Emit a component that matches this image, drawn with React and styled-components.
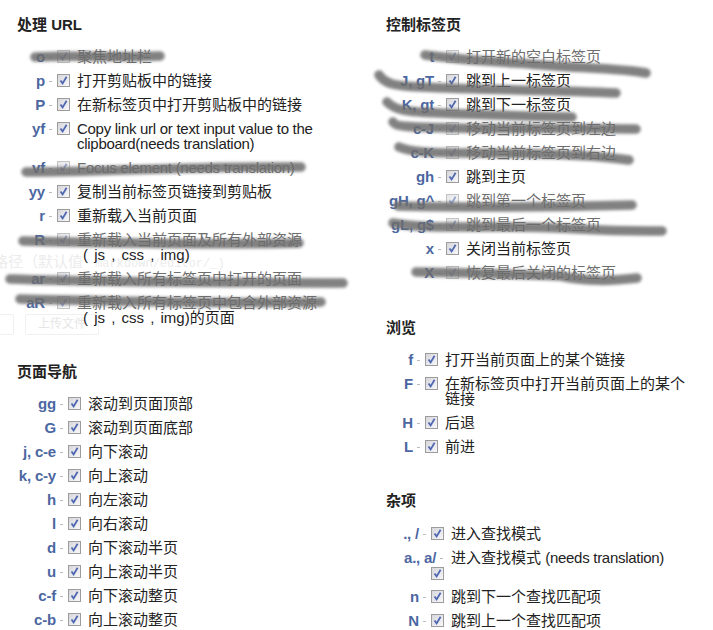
import React from "react";
import styled, { createGlobalStyle } from "styled-components";

const Global = createGlobalStyle`
  html {
    background: #fff;
  }
  body {
    margin: 0;
    font-family: "Liberation Sans", "Noto Sans CJK SC", sans-serif;
    font-size: 15px;
    color: #222;
  }
`;

const Page = styled.div`
  position: relative;
  isolation: isolate;
  width: 713px;
  height: 630px;
  overflow: hidden;
  display: grid;
  grid-template-columns: 369px 1fr;
  padding-left: 17px;
  box-sizing: border-box;
`;

const Column = styled.div`
  padding-top: 15px;
`;

const Section = styled.section`
  margin-bottom: ${(p) => p.$after || 33}px;
`;

const Heading = styled.h3`
  margin: 0 0 ${(p) => p.$gap || 10}px;
  font-size: 15px;
  line-height: 20px;
  font-weight: bold;
  color: #222;
`;

const Row = styled.div`
  display: grid;
  grid-template-columns: ${(p) => p.$keyWidth}px 12px 13px 1fr;
  padding: 4px 0 5px;
  line-height: 15px;
`;

const KeyCell = styled.div`
  grid-column: 1 / span ${(p) => (p.$wide ? 3 : 2)};
  grid-row: 1;
  display: flex;
  justify-content: ${(p) => (p.$wide ? "flex-start" : "flex-end")};
  padding-left: ${(p) => (p.$wide ? 18 : 0)}px;
  white-space: nowrap;
`;

const Key = styled.span`
  font-weight: bold;
  letter-spacing: -0.2px;
  color: #4c67a1;
`;

const Dash = styled.span`
  flex: none;
  width: 12px;
  &::after {
    content: "";
    display: block;
    width: 3px;
    height: 1px;
    margin: 8px 0 0 4px;
    background: #bbb;
  }
`;

const Box = styled.span`
  width: 13px;
  height: 13px;
  margin-top: ${(p) => (p.$below ? 2 : 1)}px;
  box-sizing: border-box;
  border: 1px solid #9c9c9c;
  background: linear-gradient(135deg, #d6d6dc, #f8f8fb);
  display: flex;
  align-items: center;
  justify-content: center;
  grid-column: 3;
  grid-row: ${(p) => (p.$below ? 2 : 1)};
  opacity: ${(p) => (p.$faded ? 0.6 : 1)};
`;

const Label = styled.span`
  grid-column: 4;
  grid-row: 1;
  margin-left: 7px;
  max-width: 250px;
  &::first-line {
    color: ${(p) => (p.$faded ? "#6e6e6e" : "#222")};
  }
`;

const En = styled.span`
  letter-spacing: -0.28px;
`;

const Note = styled.span`
  display: block;
  padding-left: 6px;
  word-spacing: 2px;
  color: #222;
`;

const GhostPath = styled.div`
  position: absolute;
  z-index: -1;
  left: -7px;
  top: 250px;
  white-space: nowrap;
  font-size: 15px;
  color: #ececec;
`;

const GhostMono = styled.span`
  margin-left: 12px;
  font-size: 12px;
  font-family: "Liberation Mono", monospace;
`;

const GhostButton = styled.div`
  position: absolute;
  z-index: -1;
  left: ${(p) => p.$left}px;
  top: 314px;
  width: ${(p) => p.$width}px;
  height: 21px;
  box-sizing: border-box;
  border: 1px solid #f0f0f0;
  border-radius: 2px;
  font-size: 12px;
  line-height: 19px;
  text-align: center;
  color: #e6e6e6;
`;

const Scribbles = styled.svg`
  position: absolute;
  left: 0;
  top: 0;
  pointer-events: none;
`;

const Stroke = styled.path`
  fill: none;
  stroke: #6c6c6c;
  stroke-width: 9.5;
  stroke-linecap: round;
  stroke-linejoin: round;
  opacity: 0.85;
  filter: blur(1.8px);
`;

const strokes = [
  "M35 57 C80 55 120 58 160 56",
  "M26 172 C100 172 200 166 301 167",
  "M23 241 C110 243 220 245 299 243",
  "M10 279 C120 283 240 282 343 283",
  "M20 299 C120 301 230 304 321 302",
  "M425 55 C460 60 500 62 530 64 C570 68 620 68 646 73",
  "M379 75 C385 84 395 86 420 87 C480 90 560 90 616 93",
  "M387 102 C395 110 405 112 440 113 C490 115 530 116 572 117",
  "M393 122 C395 127 410 127 450 128 C520 129 590 128 636 129",
  "M399 147 C410 152 430 153 470 153 C530 153 590 154 629 160",
  "M398 206 C480 208 560 207 632 205",
  "M393 223 C420 228 450 227 500 227 C560 226 590 232 662 231",
  "M416 272 C470 273 510 274 560 276 C590 282 610 281 637 278",
];

const CheckMark = () => (
  <svg width="9" height="9" viewBox="0 0 9 9">
    <path d="M1.5 4.5 L3.6 7.4 L7.6 0.8" fill="none" stroke="#5068b0" strokeWidth="1.8" />
  </svg>
);

const Shortcut = ({ keys, text, keyWidth, faded, boxBelow }) => (
  <Row $keyWidth={keyWidth}>
    <KeyCell $wide={boxBelow}>
      <Key>{keys}</Key>
      <Dash />
    </KeyCell>
    <Box $below={boxBelow} $faded={faded}>
      <CheckMark />
    </Box>
    <Label $faded={faded}>{text}</Label>
  </Row>
);

const urlRows = [
  { keys: "o", text: "聚焦地址栏", faded: true },
  { keys: "p", text: "打开剪贴板中的链接" },
  { keys: "P", text: "在新标签页中打开剪贴板中的链接" },
  { keys: "yf", text: <En>Copy link url or text input value to the clipboard(needs translation)</En> },
  { keys: "vf", text: <En>Focus element (needs translation)</En>, faded: true },
  { keys: "yy", text: "复制当前标签页链接到剪贴板" },
  { keys: "r", text: "重新载入当前页面" },
  { keys: "R", text: <>重新载入当前页面及所有外部资源<Note>( js , css , img)</Note></>, faded: true },
  { keys: "ar", text: "重新载入所有标签页中打开的页面", faded: true },
  { keys: "aR", text: <>重新载入所有标签页中包含外部资源<Note>( js , css , img)的页面</Note></>, faded: true },
];

const navRows = [
  { keys: "gg", text: "滚动到页面顶部" },
  { keys: "G", text: "滚动到页面底部" },
  { keys: "j, c-e", text: "向下滚动" },
  { keys: "k, c-y", text: "向上滚动" },
  { keys: "h", text: "向左滚动" },
  { keys: "l", text: "向右滚动" },
  { keys: "d", text: "向下滚动半页" },
  { keys: "u", text: "向上滚动半页" },
  { keys: "c-f", text: "向下滚动整页" },
  { keys: "c-b", text: "向上滚动整页" },
];

const tabRows = [
  { keys: "t", text: "打开新的空白标签页", faded: true },
  { keys: "J, gT", text: "跳到上一标签页" },
  { keys: "K, gt", text: "跳到下一标签页" },
  { keys: "c-J", text: "移动当前标签页到左边", faded: true },
  { keys: "c-K", text: "移动当前标签页到右边", faded: true },
  { keys: "gh", text: "跳到主页" },
  { keys: "gH, g^", text: "跳到第一个标签页", faded: true },
  { keys: "gL, g$", text: "跳到最后一个标签页", faded: true },
  { keys: "x", text: "关闭当前标签页" },
  { keys: "X", text: "恢复最后关闭的标签页", faded: true },
];

const browseRows = [
  { keys: "f", text: "打开当前页面上的某个链接" },
  { keys: "F", text: "在新标签页中打开当前页面上的某个链接" },
  { keys: "H", text: "后退" },
  { keys: "L", text: "前进" },
];

const miscRows = [
  { keys: "., /", text: "进入查找模式" },
  { keys: "a., a/", text: <>进入查找模式 <En>(needs translation)</En></>, boxBelow: true },
  { keys: "n", text: "跳到下一个查找匹配项" },
  { keys: "N", text: "跳到上一个查找匹配项" },
];

const Group = ({ title, rows, keyWidth, after, gap }) => (
  <Section $after={after}>
    <Heading $gap={gap}>{title}</Heading>
    {rows.map((r) => (
      <Shortcut key={r.keys} keyWidth={keyWidth} {...r} />
    ))}
  </Section>
);

export default function App() {
  return (
    <>
      <Global />
      <Page>
        <GhostPath>路径（默认值<GhostMono>markdown/editor/_)</GhostMono></GhostPath>
        <GhostButton $left={-20} $width={34} />
        <GhostButton $left={25} $width={74}>上传文件</GhostButton>
        <Column>
          <Group title="处理 URL" rows={urlRows} keyWidth={28} after={32} />
          <Group title="页面导航" rows={navRows} keyWidth={39} />
        </Column>
        <Column>
          <Group title="控制标签页" rows={tabRows} keyWidth={48} />
          <Group title="浏览" rows={browseRows} keyWidth={27} after={32} />
          <Group title="杂项" rows={miscRows} keyWidth={33} gap={11} />
        </Column>
        <Scribbles width="713" height="630" viewBox="0 0 713 630">
          {strokes.map((d) => (
            <Stroke key={d} d={d} />
          ))}
        </Scribbles>
      </Page>
    </>
  );
}
